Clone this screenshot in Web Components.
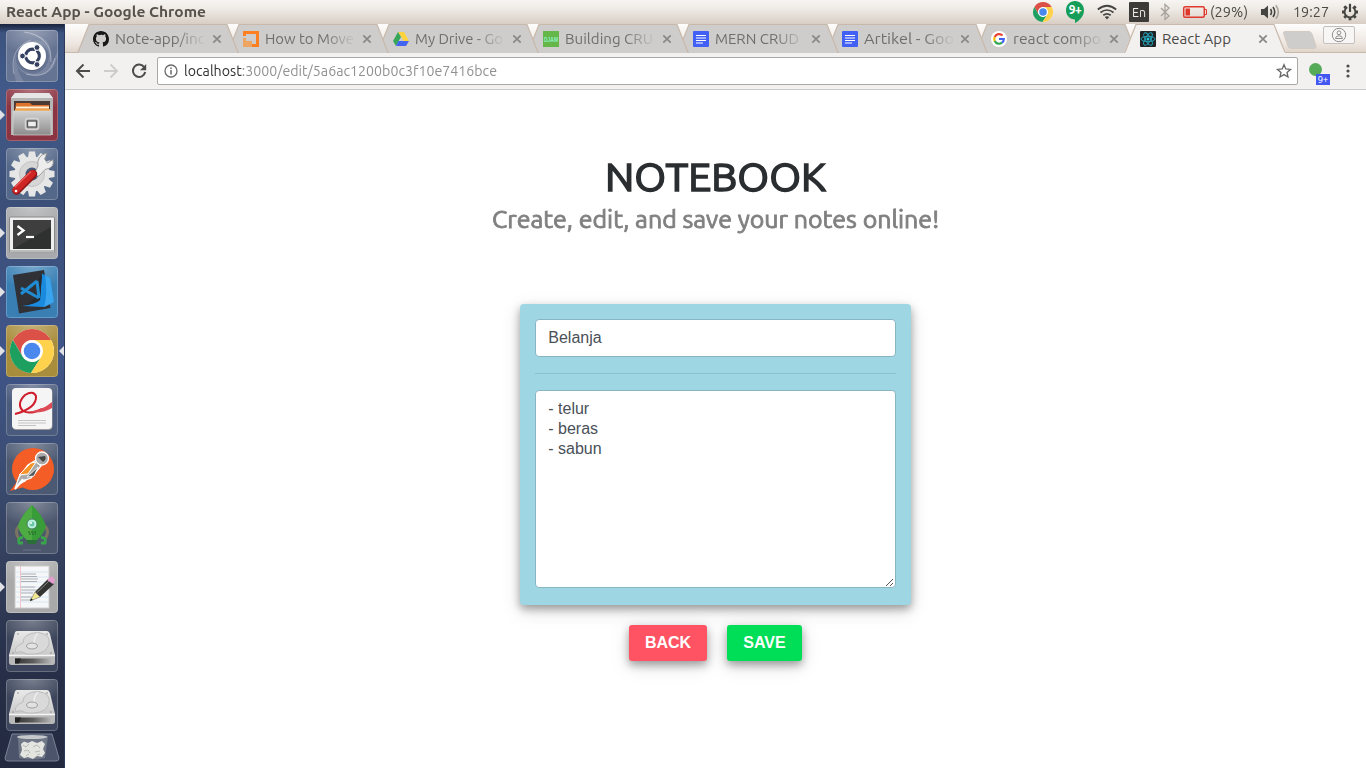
<!DOCTYPE html>
<html lang="en"><head><meta charset="utf-8"><title>React App</title>
<style>
html,body{margin:0;height:100%;overflow:hidden;background:#fff}
body{font-family:Ubuntu,"Noto Sans",sans-serif;color:#3c3c3c}
</style></head><body>
<desk-top></desk-top>
<script>
const chromeMark = `<circle cx="26" cy="26" r="22" fill="#fff"/><path d="M7 15A22 22 0 0 1 45 15H26A11 11 0 0 0 16.5 31.5Z" fill="#db5148"/><path d="M6.9 15A22 22 0 0 0 25 48L34.5 33A11 11 0 0 1 16.5 31.5Z" fill="#1d9f60"/><path d="M45.100 15A22 22 0 0 1 25 48L35.500 31.500A11 11 0 0 0 26 15Z" fill="#ffd24d"/><circle cx="26" cy="26" r="10.300" fill="#fff"/><circle cx="26" cy="26" r="8.300" fill="#4a88ee"/>`;
const drive = `<defs><linearGradient id="m" x2="0" y2="1"><stop stop-color="#e9e9e9"/><stop offset="1" stop-color="#c9c9c9"/></linearGradient><linearGradient id="k"><stop stop-color="#333"/><stop offset=".5" stop-color="#5c5c5c"/><stop offset="1" stop-color="#b5b5b5"/></linearGradient></defs>
<path d="M11 11H41Q43 11 44 14L49 35H3L8.500 14Q9 11 11 11Z" fill="url(#m)"/><path d="M3 35H49V42Q49 45 46.500 45H5.500Q3 45 3 42Z" fill="#b9b9b9"/><path d="M3 35.500H49" stroke="#f5f5f5" stroke-width="1.300"/><path d="M9 38.500H45V43.500H9Z" fill="url(#k)"/><path d="M9 38.500H15L13 43.500H9Z" fill="#222"/>
<path d="M10 33Q7 27 17 23Q17 13 32 12.500Q45 14 43 24Q41 33 28 34Q20 35 16 32Q13 31 10 33Z" fill="#d9d9d9" stroke="#b5b5b5" stroke-width=".8"/><path d="M32 13Q28 17 28 23" fill="none" stroke="#eee" stroke-width="1.500"/><ellipse cx="26" cy="26" rx="5.500" ry="3" fill="#e2e2e2" stroke="#999" stroke-width=".9"/><circle cx="12" cy="14" r=".8" fill="#888"/><circle cx="41" cy="14" r=".8" fill="#888"/><circle cx="7" cy="33" r=".8" fill="#888"/><circle cx="45" cy="33" r=".8" fill="#888"/>`;
const doc = `<rect width="16" height="16" rx="1" fill="#4360f4"/><path d="M3 4.500H13M3 7H13M3 9.500H13M3 12H10" stroke="#fff" stroke-width="1.200"/>`;
const gearTeeth = n => Array.from({length:n},(_,i)=>`<path d="M21.500 12L23 3.500H29L30.500 12Z" transform="rotate(${i*360/n} 26 26)"/>`).join('');
const ICONS = {
 chrome:['4 4 44 44',chromeMark],
 bigchrome:['0 0 52 52',chromeMark],
 ubuntu:['0 0 52 52',`<g fill="#fff" opacity=".13"><path d="M10 52Q2 20 25 11Q42 8 44 26A18 18 0 0 0 12 20Q6 34 18 52Z"/><path d="M13 1Q52 4 44 34Q40 44 28 44A18 18 0 0 0 38 14Q30 2 13 1Z"/><path d="M52 20Q50 50 22 45Q8 40 9 24A18 18 0 0 0 34 42Q46 38 52 20Z"/></g><g fill="none" stroke="#fff" stroke-width="1" opacity=".35"><path d="M8 44Q3 18 25 10"/><path d="M18 2Q46 6 45 32"/><path d="M49 28Q44 50 20 44"/></g><circle cx="26" cy="27" r="14" fill="#445" opacity=".4"/><circle cx="26" cy="26" r="14" fill="#fff"/><circle cx="26.500" cy="26" r="6.800" fill="none" stroke="#364162" stroke-width="3.200"/><path d="M26 26H16M26.500 26L31 18M26.500 26L31 34" stroke="#fff" stroke-width="1.500"/><circle cx="26.500" cy="26" r="5" fill="#fff"/><g fill="#364162" stroke="#fff" stroke-width="1"><circle cx="16.500" cy="26" r="2.900"/><circle cx="31" cy="17.500" r="2.900"/><circle cx="31" cy="34.500" r="2.900"/></g>`],
 files:['0 0 52 52',`<defs><linearGradient id="f" x2="0" y2="1"><stop stop-color="#d2d2d2"/><stop offset="1" stop-color="#8c8c8c"/></linearGradient></defs><path d="M9 4H43L47 9V46H5V9Z" fill="#b5b5b5"/><path d="M9 4H43L47 9H5Z" fill="#e6e6e6"/><rect x="8" y="12" width="36" height="12" fill="#4a3a33"/><path d="M10 14H24L26 16H43V23H9Z" fill="#de732b"/><path d="M10 17.500H43V19.500H10Z" fill="#fff2d7"/><path d="M9 20H44V23H9Z" fill="#f3a244"/><path d="M7 22H45V46H7Z" fill="url(#f)" stroke="#d5d5d5" stroke-width=".7"/><rect x="19.500" y="29.500" width="13" height="11" rx="2.500" fill="#aaa" stroke="#d5d5d5" stroke-width="1.500"/><rect x="21.500" y="32" width="9" height="6" fill="#eee" stroke="#555" stroke-width="1.300"/>`],
 settings:['0 0 52 52',`<g fill="#e6e6e6">${gearTeeth(12)}<circle cx="26" cy="26" r="17.500"/></g><circle cx="26" cy="26" r="12.500" fill="#d6d6d6" stroke="#c3c3c3"/><circle cx="26" cy="26" r="6.500" fill="#465877"/><path d="M27 28L32 18Q30 8 41 5L38.500 11L41.500 15L47 11.500Q49 20 39 21.500L33 28Z" fill="#ededed" stroke="#8d8d8d" stroke-width=".8"/><path d="M10.500 42.500L27 26" stroke="#8d1517" stroke-width="8.500" stroke-linecap="round"/><path d="M10 42L26.500 25.500" stroke="#cf2424" stroke-width="6.800" stroke-linecap="round"/><path d="M9 39L25 23.500" stroke="#ea5f58" stroke-width="1.300"/><circle cx="10" cy="43" r="1.300" fill="#fff"/>`],
 terminal:['0 0 52 52',`<rect x="3.500" y="10" width="45" height="35.500" rx="1" fill="#efefef" stroke="#888"/><rect x="4" y="43" width="44" height="2.500" fill="#bbb"/><rect x="7" y="13" width="38" height="29" fill="#2f3030"/><path d="M7 13H45V20L7 42Z" fill="#555" opacity=".4"/><path d="M11.500 19L17.500 23.500L11.500 28" fill="none" stroke="#fff" stroke-width="2.300"/><path d="M20 30H28" stroke="#fff" stroke-width="2.200"/>`],
 code:['0 0 52 52',`<path d="M7 9L38 4L44.500 42L13 47.500Z" fill="#303136"/><path d="M36 7.500L44 12L48 36L38 41L16 40Q30 38 34 34Z" fill="#1a8ade"/><path d="M44 12L48 36L38 41Q42 28 39 9Z" fill="#3ba4ee"/><path d="M33 12L36 8L34 34Q28 38 20 39Q34 32 33 12Z" fill="#252a30"/><path d="M31 15L15 28M15 22L33 32M31 15L33 32" fill="none" stroke="#218bd1" stroke-width="3"/>`],
 pdf:['0 0 52 52',`<rect x="6.500" y="5" width="40" height="41" rx="4" fill="#999"/><rect x="6" y="4" width="40" height="41" rx="4" fill="#f5f5f5"/><path d="M9 30Q31 24 30 12Q27 6 19 11Q10 20 17 27Q24 31 36 25" fill="none" stroke="#cf1d2c" stroke-width="2"/><path d="M22 28Q37 26 46 18V24Q36 30 22 28Z" fill="#dd4b56"/><path d="M12 36.500H40M12 39H40M12 41.500H30" stroke="#c4c4c4"/>`],
 postman:['0 0 52 52',`<circle cx="27" cy="26" r="21" fill="#f45d25"/><path d="M4 48L12 37L22 43Z" fill="#f45d25"/><path d="M30 17L35 23L25 35L17 38L9 46L13 34L22 22Z" fill="#aaa" stroke="#fff" stroke-width="1.300"/><path d="M25 20L30 19L22 31L13 32Z" fill="#f69329" stroke="#fff"/><path d="M32 24L21 34L28 33Z" fill="#555" stroke="#fff" stroke-width=".8"/><circle cx="36" cy="15.500" r="6.500" fill="#aaa" stroke="#fff" stroke-width="1.300"/><path d="M32 14L39 13Q41 16 37 19Z" fill="#444"/><path d="M17 36L9 46M14 40L20 37" stroke="#fff" stroke-width="2"/>`],
 rocket:['0 0 52 52',`<path d="M13 24Q8 29 13 37M39 24Q44 29 39 37" fill="none" stroke="#79755f" stroke-width="3"/><path d="M17 35.500Q11 35.500 13 41L17 41M35 35.500Q41 35.500 39 41L35 41" fill="none" stroke="#38a64b" stroke-width="2.800"/><path d="M20 37H32L30 42H22Z" fill="#2b6e3a"/><path d="M26 3Q37 14 40 24Q38 32 31 38H21Q14 32 12 24Q15 14 26 3Z" fill="#389c38"/><path d="M26 3V38H21Q14 32 12 24Q15 14 26 3Z" fill="#4eaa42"/><circle cx="26" cy="22" r="5" fill="#baf5df" stroke="#487c65"/><circle cx="26" cy="22" r="2.500" fill="#6cc7aa"/><circle cx="25" cy="21" r="1" fill="#fff"/><path d="M22 30H31M23 32H30" stroke="#216325" stroke-dasharray="2 1"/><path d="M17 48H35" stroke="#969ba5" opacity=".4"/>`],
 editor:['0 0 52 52',`<rect x="9" y="5" width="34" height="42" fill="#f6f7f9" stroke="#ccc"/><path d="M14.500 5V47" stroke="#f4b5b5" stroke-width=".8"/><path d="M10 11H43M10 16H43M10 21H43M10 26H43M10 31H43M10 36H43M10 41H43" stroke="#cfdcf0" stroke-width=".7"/><path d="M15 13H30M15 15.500H31M15 18H32M15 20.500H31M15 26H29M15 29H32M15 32H27M15 36H28M15 39H25" stroke="#a4a7ac" stroke-width=".9"/><path d="M24 40L29 31L42 18L48 23L34 36Z" fill="#333"/><path d="M24 40L29 31L34 36Z" fill="#f0e891" stroke="#988" stroke-width=".5"/><path d="M24 40L25 37L27 39Z" fill="#222"/><path d="M41 19L44 16Q47 15 48 17Q50 20 47 23Z" fill="#e39ed0"/><path d="M30.500 32L43 20" stroke="#888"/>`],
 disk:['0 0 52 52',drive],
 trash:['0 0 56 29',`<path d="M8 1H48L55 25Q55 28 52 28H4Q1 28 1 25Z" fill="#4b546a" stroke="#7a8293"/><path d="M14 3H44L41 25Q28 28 15 25Z" fill="#88909a" opacity=".6"/><ellipse cx="28" cy="4" rx="15" ry="2" fill="#c5c9cb"/><path d="M17 11L20 8.500L24 10L28 8L33 10L38 8L41 11L39 16L41 20L38 24L33 23L29 26L24 24L20 25L16 22L18 17Z" fill="#e4e5e1"/><path d="M19 12L22 14L25 11M29 14L33 12L36 15M20 18L24 17L26 20M31 19L36 18M22 23L25 21M33 22L36 21" fill="none" stroke="#b5b9b3"/>`],
 hang:['0 0 18 22',`<path d="M9 0C14 0 18 4 18 9.300C18 15 14 19.500 9 22V18.500C4 18.500 0 14.500 0 9.300C0 4 4 0 9 0Z" fill="#159e59"/>`],
 wifi:['0 0 20 16',`<g fill="none" stroke="#454542" stroke-width="1.700"><path d="M.8 5.500Q10-2 19.200 5.500"/><path d="M3.500 8.500Q10 3.500 16.500 8.500" /><path d="M6.300 11.300Q10 8.500 13.700 11.300"/></g><path d="M7.800 13Q10 11.600 12.200 13L10 15.500Z" fill="#454542"/>`],
 bt:['0 0 12 18',`<path d="M2 5L10 13L6 16.500V1.500L10 5L2 13" fill="none" stroke="#a7a29c" stroke-width="1.300"/>`],
 battery:['0 0 26 14',`<rect x="1.700" y="1.700" width="20.600" height="10.600" rx="1.500" fill="none" stroke="#df382c" stroke-width="1.500"/><path d="M23 4.500H24.500V9.500H23" fill="none" stroke="#df382c"/><rect x="3.500" y="3.500" width="4.500" height="7" fill="#df382c"/>`],
 volume:['0 0 20 16',`<path d="M1 5H4L8 1.500V14.500L4 11H1Z" fill="#454542"/><g fill="none" stroke="#454542" stroke-width="1.600"><path d="M10.500 5Q12.500 8 10.500 11"/><path d="M13 3Q16.500 8 13 13"/><path d="M15.800 1.200Q21 8 15.800 14.800" stroke="#aaa49e"/></g>`],
 power:['0 0 18 18',`<g stroke="#454542" fill="none"><path d="M6.300 4.300A5.400 5.400 0 1 0 11.700 4.300" stroke-width="1.900"/><path d="M9 .8V9" stroke-width="2.200"/><path d="M1 9H4M14 9H17M3.300 14.700L5.200 12.800M14.700 14.700L12.800 12.800M9 14V17.200M3.300 3.300L5.200 5.200M14.700 3.300L12.800 5.200" stroke-width="2.800"/></g>`],
 github:['0 0 16 16',`<path fill="#181818" d="M8 0C3.580 0 0 3.580 0 8c0 3.540 2.290 6.530 5.470 7.590.4.070.55-.17.55-.38v-1.490c-2.010.37-2.530-.49-2.690-.94-.09-.23-.48-.94-.82-1.130-.28-.15-.68-.52-.01-.53.63-.01 1.080.58 1.230.82.72 1.210 1.870.87 2.330.66.07-.52.28-.87.51-1.070-1.780-.2-3.640-.89-3.640-3.950 0-.87.31-1.590.82-2.150-.08-.2-.36-1.020.08-2.120 0 0 .67-.21 2.200.82A7.600 7.600 0 0 1 8 3.870c.68 0 1.360.09 2 .26 1.530-1.040 2.200-.82 2.200-.82.44 1.100.16 1.920.08 2.120.51.56.82 1.270.82 2.150 0 3.070-1.870 3.750-3.650 3.950.29.25.54.73.54 1.480v2.200c0 .21.15.46.55.38A8.010 8.010 0 0 0 16 8c0-4.420-3.580-8-8-8Z"/>`],
 move:['0 0 16 16',`<path d="M0 0H16V16H9V13H13V3H3V5H0Z" fill="#fd7f22"/><path d="M0 7H3V10H9V16H0Z" fill="#efa562"/>`],
 gdrive:['0 0 16 16',`<path d="M5 1H11L16 10H11Z" fill="#ffd33d"/><path d="M5 1L8 6L3 15L0 10Z" fill="#37a65a"/><path d="M5.500 10H16L13 15H3Z" fill="#4265f0"/>`],
 djam:['0 0 16 16',`<rect width="16" height="16" fill="#64b748"/><text x="1" y="10.500" font-family="Liberation Sans" font-size="7.500" font-weight="bold" textLength="14" lengthAdjust="spacingAndGlyphs" fill="#8df0c4">DJAM</text>`],
 doc:['0 0 16 16',doc],
 google:['0 0 16 16',`<circle cx="8" cy="8" r="8" fill="#fff"/><g fill="none" stroke-width="2.200"><path d="M11.500 4.500A4.800 4.800 0 0 0 3.700 6" stroke="#ea4335"/><path d="M3.700 6A4.800 4.800 0 0 0 3.700 10" stroke="#fbbc05"/><path d="M3.700 10A4.800 4.800 0 0 0 11 11.700" stroke="#34a853"/><path d="M11 11.700Q12.800 10.500 12.800 8H8" stroke="#4260f4"/></g>`],
 react:['0 0 16 16',`<rect width="16" height="16" rx="1" fill="#202326"/><g fill="none" stroke="#25a9bf" stroke-width=".9"><ellipse cx="8" cy="8" rx="7" ry="2.700"/><ellipse cx="8" cy="8" rx="7" ry="2.700" transform="rotate(60 8 8)"/><ellipse cx="8" cy="8" rx="7" ry="2.700" transform="rotate(120 8 8)"/></g><circle cx="8" cy="8" r="1.500" fill="#25c9df"/>`],
 close:['0 0 10 10',`<path d="M1.300 1.300L8.700 8.700M8.700 1.300L1.300 8.700" stroke="#898887" stroke-width="1.700"/>`],
 back:['0 0 16 16',`<path d="M15 8H2M8.500 1.500L2 8L8.500 14.500" fill="none" stroke="#4c4c4c" stroke-width="2"/>`],
 forward:['0 0 16 16',`<path d="M1 8H14M7.500 1.500L14 8L7.500 14.500" fill="none" stroke="#cecdcc" stroke-width="2"/>`],
 reload:['0 0 16 16',`<path d="M13.300 4.300A6.200 6.200 0 1 0 14.200 9" fill="none" stroke="#4c4c4c" stroke-width="2"/><path d="M15.200 1V7.200H9Z" fill="#4c4c4c"/>`],
 info:['0 0 14 14',`<circle cx="7" cy="7" r="6" fill="none" stroke="#6b6b6b" stroke-width="1.300"/><path d="M7 6V10.500M7 3.500V5" stroke="#6b6b6b" stroke-width="1.500"/>`],
 star:['0 0 16 16',`<path d="M8 1.700L9.800 6L14.500 6.400L11 9.500L12 14L8 11.600L4 14L5 9.500L1.500 6.400L6.200 6Z" fill="none" stroke="#666" stroke-width="1.300"/>`],
 dots:['0 0 4 14',`<g fill="#4c4c4c"><circle cx="2" cy="2" r="1.600"/><circle cx="2" cy="7" r="1.600"/><circle cx="2" cy="12" r="1.600"/></g>`],
 user:['0 0 16 16',`<g fill="none" stroke="#8f8f8f"><circle cx="8" cy="8" r="6.700"/><circle cx="8" cy="5.800" r="1.900"/><path d="M4.500 11.500Q4.500 8.800 8 8.800T11.500 11.500Z"/></g>`],
 newtab:['0 0 34 18',`<path d="M2 .5H26Q28 .5 29 3L33 15Q33.500 17.500 31 17.500H8Q6 17.500 5 15L.7 3Q0 .5 2 .5Z" fill="#cfcdcb" stroke="#d3cac1"/>`],
 grip:['0 0 9 9',`<path d="M1 8L8 1M5 8L8 5" stroke="#555" stroke-width="1"/>`]
};
function define(name, html, init){
 customElements.define(name, class extends HTMLElement{
  connectedCallback(){
   if(this.shadowRoot) return;
   this.attachShadow({mode:'open'}).innerHTML = typeof html==='function' ? html(this) : html;
   if(init) init(this);
  }
 });
}
const at=(e,n,d='')=>e.getAttribute(n)??d;

define('ui-icon', e=>{const [vb,body]=ICONS[at(e,'name')];
 return `<style>:host{display:block;flex:none;width:${at(e,'w',16)}px;height:${at(e,'h',at(e,'w',16))}px}svg{display:block;width:100%;height:100%;overflow:visible}</style><svg viewBox="${vb}">${body}</svg>`});

/* Scales a single line of text horizontally to a fixed measure. */
define('fit-text', e=>`<style>:host{display:block;flex:none;width:${at(e,'w')}px;white-space:nowrap}span{display:inline-block;transform-origin:0 50%}</style><span><slot></slot></span>`,
 e=>{const s=e.shadowRoot.querySelector('span');const k=+at(e,'w')/s.getBoundingClientRect().width;if(Math.abs(k-1)>.004)s.style.transform=`scaleX(${k})`});

define('top-panel', `<style>
:host{display:flex;box-sizing:border-box;height:24px;align-items:center;padding:0 8px 0 6px;background:linear-gradient(#f7f5f2,#eee9e4 40%,#d8cec5);font-size:15px;line-height:24px;color:#4b4a45}
.t{font-weight:700;font-size:14.670px;color:#57524c}.s{flex:1}
.en{box-sizing:border-box;width:20px;height:20px;background:#3c3b37;color:#f3f0eb;border-radius:1px;line-height:21px;font-size:13.500px;padding-left:3px;margin:0 10px 0 12px}
.h{display:grid;width:18px;margin:0 13px}.h>*{grid-area:1/1}.h b{position:relative;color:#fff;font-size:12px;line-height:18px;text-align:center;letter-spacing:-.5px}
</style><fit-text class="t" w="200">React App - Google Chrome</fit-text><span class="s"></span>
<ui-icon name="chrome" w="20"></ui-icon><div class="h"><ui-icon name="hang" w="18" h="22"></ui-icon><b>9+</b></div>
<ui-icon name="wifi" w="20" h="16"></ui-icon><div class="en"><fit-text w="14">En</fit-text></div>
<ui-icon name="bt" w="12" h="18"></ui-icon><ui-icon name="battery" w="26" h="14" style="margin:0 2px 0 11px"></ui-icon><fit-text w="38">(29%)</fit-text>
<ui-icon name="volume" w="20" h="16" style="margin:0 13px 0 12px"></ui-icon><fit-text w="36">19:27</fit-text><ui-icon name="power" w="18" style="margin:0 -1px 0 12px"></ui-icon>`);

define('launcher-tile', e=>`<style>
:host{display:block;position:relative;flex:none;width:52px;height:52px}
.b{box-sizing:border-box;height:52px;border-radius:4px;background:radial-gradient(ellipse 70% 45% at 50% 0,#ffffff50,#ffffff00),${at(e,'bg','#53617f')};box-shadow:inset 0 0 0 1px #ffffff38}
i{position:absolute;top:21px;width:0;height:0;border:5px solid transparent}
.l{left:-6px;border-left-color:#e1e2e5;border-right:0}.r{right:-6px;border-right-color:#e1e2e5;border-left:0}
</style><div class="b"><ui-icon name="${at(e,'icon')}" w="52"></ui-icon></div>${e.hasAttribute('run')?'<i class="l"></i>':''}${e.hasAttribute('active')?'<i class="r"></i>':''}`);

define('unity-launcher', `<style>
:host{display:flex;flex-direction:column;align-items:center;gap:7px;box-sizing:border-box;width:65px;padding:6px 1px 0 0;overflow:hidden;border-right:1px solid #2c3a5a;background:linear-gradient(#19233c,#3d5480 9px,#425b8b 80px,#3b4f78 180px,#40568a 330px,#3b4d73 440px,#333f5c 540px,#272f48 650px,#232a40)}
ui-icon{margin-top:-5px}
</style>
<launcher-tile icon="ubuntu" bg="#667493"></launcher-tile>
<launcher-tile icon="files" run bg="#8c3442"></launcher-tile>
<launcher-tile icon="settings" bg="#546889"></launcher-tile>
<launcher-tile icon="terminal" run bg="#a8a9ac"></launcher-tile>
<launcher-tile icon="code" run bg="#397fb4"></launcher-tile>
<launcher-tile icon="bigchrome" run active bg="#a88d3c"></launcher-tile>
<launcher-tile icon="pdf" bg="#4b5b7d"></launcher-tile>
<launcher-tile icon="postman" bg="#4c5972"></launcher-tile>
<launcher-tile icon="rocket" bg="#4c576e"></launcher-tile>
<launcher-tile icon="editor" run bg="#a9a9aa"></launcher-tile>
<launcher-tile icon="disk" bg="#3c455b"></launcher-tile>
<launcher-tile icon="disk" bg="#3c455b"></launcher-tile>
<ui-icon name="trash" w="56" h="29"></ui-icon>`);

define('browser-tab', e=>{const on=e.hasAttribute('active'), z=+at(e,'z');return `<style>
:host{display:grid;flex:none;width:${z>5||on?162:161}px;height:29px;margin-right:-12px;position:relative;z-index:${on?20:z}}
:host>*{grid-area:1/1}.s{width:162px;height:29px;display:block}
.row{display:flex;align-items:center;padding:1px 0 0 16px;font-size:15px;line-height:28px;color:${on?'#4c4a48':'#706e6c'}}
.title{width:90px;margin-left:6px;overflow:hidden;${on?'':'-webkit-mask:linear-gradient(90deg,#000 60px,transparent 91px);'}}
.x{margin-left:${z>5?7:6}px}
</style><svg class="s" viewBox="0 0 162 29"><path d="M0 29L12 .5H150L162 29Z" fill="${on?'#f2f1f0':'#cfcdcc'}"/><path d="M0 28.500H1L12 .5H150L161 28.500H162" fill="none" stroke="#c8b9ab" stroke-width="1.200"/>${on?'<path d="M1.500 28H160.500V29H1.500Z" fill="#f2f1f0"/>':''}</svg>
<div class="row"><ui-icon name="${at(e,'icon')}" w="16"></ui-icon><div class="title"><fit-text w="${at(e,'w')}"><slot></slot></fit-text></div><ui-icon class="x" name="close" w="10"></ui-icon></div>`});

define('tab-strip', `<style>
:host{display:flex;box-sizing:border-box;height:29px;padding-left:12px;background:linear-gradient(#fefdfc,#eee7e1 65%,#ded3c9);box-shadow:inset 0 -1px #c8b9ab}
.n{margin:7px 0 0 9px}.u{display:grid;place-items:center;box-sizing:border-box;width:32px;height:18px;margin:2px 0 0 6px;border:1px solid #c5c0bb;border-radius:2px;background:#f8f6f4}
</style>
<browser-tab z="9" icon="github" w="90">Note-app/inc</browser-tab>
<browser-tab z="8" icon="move" w="89">How to Move</browser-tab>
<browser-tab z="7" icon="gdrive" w="88">My Drive - Go</browser-tab>
<browser-tab z="6" icon="djam" w="88">Building CRU</browser-tab>
<browser-tab z="5" icon="doc" w="84">MERN CRUD</browser-tab>
<browser-tab z="4" icon="doc" w="90">Artikel - Goo</browser-tab>
<browser-tab z="3" icon="google" w="88">react compo</browser-tab>
<browser-tab active icon="react" w="69">React App</browser-tab>
<ui-icon class="n" name="newtab" w="34" h="18"></ui-icon><div class="u"><ui-icon name="user" w="16"></ui-icon></div>`);

define('tool-bar', `<style>
:host{display:flex;align-items:center;box-sizing:border-box;height:37px;padding:0 15px 1px 10px;background:#f2f1f0;border-bottom:1px solid #cbcac9}
.box{display:flex;flex:none;align-items:center;box-sizing:border-box;width:1141px;height:28px;margin-left:10px;padding:0 5px 0 6px;border:1px solid #aaa8a7;border-radius:2px;background:#fff;font-size:14.500px;line-height:24px;color:#909090}
b{font-weight:400;color:#303030}.sp{flex:1}
.ext{position:relative;flex:none;width:20px;height:16px;margin:0 17px 0 11px}.ext i{display:block;width:13px;height:13px;border-radius:50%;background:#56ab58}
.ext span{position:absolute;left:7px;top:11px;width:14px;height:11px;background:#4358f3;color:#fff;font:9px/11px "Noto Sans",sans-serif;text-align:center}
</style>
<ui-icon name="back" w="16"></ui-icon><ui-icon name="forward" w="16" style="margin:0 12px"></ui-icon><ui-icon name="reload" w="16"></ui-icon>
<div class="box"><ui-icon name="info" w="14"></ui-icon><fit-text w="313" style="margin-left:6px"><b>localhost</b>:3000/edit/5a6ac1200b0c3f10e7416bce</fit-text><span class="sp"></span><ui-icon name="star" w="16"></ui-icon></div>
<div class="ext"><i></i><span>9+</span></div><ui-icon name="dots" w="4" h="14"></ui-icon>`);

define('note-button', e=>`<style>
:host{display:block;box-sizing:border-box;width:${at(e,'w')}px;height:36px;border-radius:3px;background:${at(e,'color')};box-shadow:0 4px 8px #0005,0 5px 20px #0002;color:#fff;font:bold 16px/35px "Liberation Sans",sans-serif;text-align:center}
</style><slot></slot>`);

define('note-form', `<style>
:host{display:block;box-sizing:border-box;width:391px;height:301px;padding:15px;border-radius:4px;background:#9fd6e4;box-shadow:0 4px 8px #0005,0 6px 20px #0002;font:16px/20px "Liberation Sans",sans-serif;color:#495057}
.f{box-sizing:border-box;width:361px;border:1px solid #87b6c2;border-radius:4px;background:#fff;padding:0 12.300px}
.one{height:38px;line-height:36px}.rule{height:1px;margin:16px 0;background:#8fc0cd}
.many{position:relative;height:198px;padding-top:8px;white-space:pre}
ui-icon{position:absolute;right:1px;bottom:0}
</style><div class="f one">Belanja</div><div class="rule"></div><div class="f many">- telur
- beras
- sabun<ui-icon name="grip" w="9"></ui-icon></div>`);

define('note-page', `<style>
:host{display:flex;flex-direction:column;align-items:center;flex:1;background:#fff}
h1{margin:62px 0 0;font-size:39.500px;line-height:48px;font-weight:400;color:#2b2e31;-webkit-text-stroke:1.500px #2b2e31}
h2{margin:5px 0 0;font-size:23.700px;line-height:28px;font-weight:400;color:#808080;-webkit-text-stroke:.800px #808080}
note-form{margin-top:71px}.a{display:flex;gap:20px;margin-top:20px}
</style><h1><fit-text w="221">NOTEBOOK</fit-text></h1><h2><fit-text w="447">Create, edit, and save your notes online!</fit-text></h2>
<note-form></note-form><div class="a"><note-button w="78" color="#ff5363">BACK</note-button><note-button w="75" color="#00dd57">SAVE</note-button></div>`);

define('desk-top', `<style>
:host{display:grid;width:1366px;height:768px;grid-template:24px 744px/65px 1301px;overflow:hidden}
top-panel{grid-column:1/3}.w{display:flex;flex-direction:column;min-width:0}
</style><top-panel></top-panel><unity-launcher></unity-launcher><div class="w"><tab-strip></tab-strip><tool-bar></tool-bar><note-page></note-page></div>`);
</script></body></html>
